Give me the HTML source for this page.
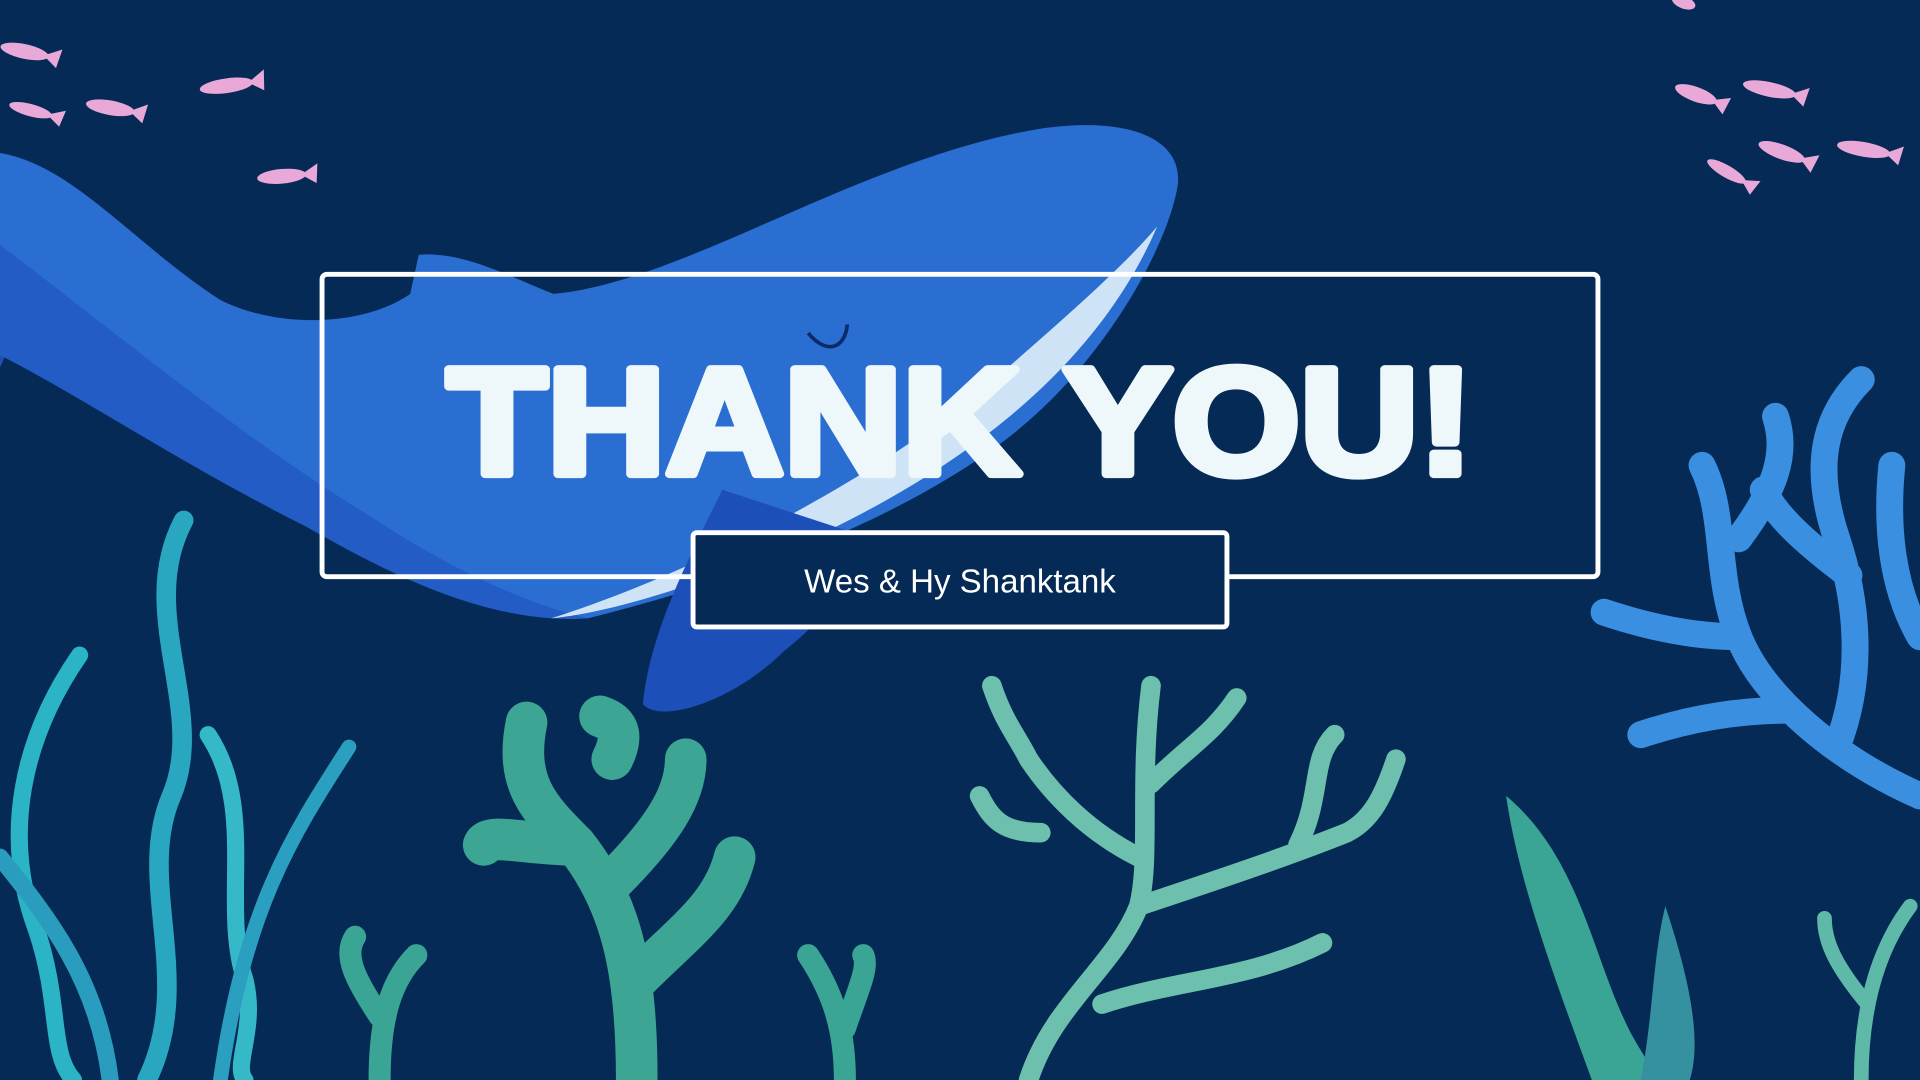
<!DOCTYPE html>
<html><head><meta charset="utf-8"><style>
html,body{margin:0;padding:0;background:#052a55;overflow:hidden}
svg{display:block}
</style></head><body>
<svg width="1920" height="1080" viewBox="0 0 1568 882" xmlns="http://www.w3.org/2000/svg">
<rect width="1568" height="882" fill="#052a55"/>
<!-- fish -->
<g fill="#e8a9d8">
<g transform="translate(20,42) rotate(12)"><ellipse cx="0" cy="0" rx="20" ry="6"/><path d="M16,0 L30,-8 L28,8Z"/></g>
<g transform="translate(25,90) rotate(15)"><ellipse rx="18" ry="5"/><path d="M14,0 L28,-7 L26,7Z"/></g>
<g transform="translate(90,88) rotate(10)"><ellipse rx="20" ry="6"/><path d="M16,0 L30,-8 L28,8Z"/></g>
<g transform="translate(185,70) rotate(-8)"><ellipse rx="22" ry="6"/><path d="M18,0 L32,-9 L30,8Z"/></g>
<g transform="translate(230,144) rotate(-5)"><ellipse rx="20" ry="6"/><path d="M16,0 L30,-8 L28,8Z"/></g>
<g transform="translate(1385,77) rotate(20)"><ellipse rx="18" ry="6"/><path d="M14,0 L28,-7 L26,8Z"/></g>
<g transform="translate(1445,73) rotate(12)"><ellipse rx="22" ry="6"/><path d="M18,0 L32,-8 L30,8Z"/></g>
<g transform="translate(1455,124) rotate(20)"><ellipse rx="20" ry="6"/><path d="M16,0 L30,-8 L28,8Z"/></g>
<g transform="translate(1410,140) rotate(30)"><ellipse rx="18" ry="5"/><path d="M14,0 L28,-7 L26,7Z"/></g>
<g transform="translate(1522,122) rotate(10)"><ellipse rx="22" ry="6"/><path d="M18,0 L32,-8 L30,8Z"/></g>
<g transform="translate(1375,2) rotate(20)"><ellipse rx="10" ry="5"/></g>
</g>
<!-- whale -->
<path d="M0,170 C20,200 25,250 0,300 Z" fill="#1f4fb0"/>
<path d="M0,125 C60,135 110,200 180,245 C230,270 300,265 335,240 L342,208 C380,205 420,228 452,240 C560,230 700,130 850,105 C920,95 965,112 962,150 C955,200 900,300 820,360 C740,420 620,470 480,505 C400,510 320,470 250,430 C150,380 60,320 0,290 Z" fill="#2a6ed2"/>
<path d="M0,200 C80,260 200,360 300,420 C360,460 420,490 480,505 C400,510 320,470 250,430 C150,380 60,320 0,290 Z" fill="#2258c0" opacity="0.8"/>
<path d="M945,185 C900,290 800,380 640,450 C560,480 500,500 450,505 C560,470 700,400 800,320 C870,260 920,215 945,185 Z" fill="#cfe3f7"/>
<path d="M590,400 C560,460 530,520 525,575 C540,592 600,572 640,532 C680,500 700,470 712,440 Z" fill="#1d4fb8"/>
<path d="M660,272 C675,290 690,285 692,265" stroke="#0b2a6a" stroke-width="3" fill="none"/>
<!-- left kelp -->
<g fill="none" stroke-linecap="round">
<path d="M150,425 C110,500 170,580 140,650 C110,720 160,800 120,882" stroke="#2aa7c0" stroke-width="16"/>
<path d="M65,535 C20,600 0,680 30,760 C50,820 40,860 60,882" stroke="#2bb3c6" stroke-width="14"/>
<path d="M170,600 C210,660 180,740 200,800 C210,840 190,870 200,882" stroke="#35b8c8" stroke-width="14"/>
<path d="M285,610 C240,680 200,740 180,882" stroke="#2a9fc0" stroke-width="12"/>
<path d="M0,700 C40,750 80,800 90,882" stroke="#2a9cbe" stroke-width="14"/>
</g>
<!-- green coral left-center -->
<g fill="none" stroke="#3da593" stroke-linecap="round" stroke-width="34">
<path d="M520,882 C520,800 510,740 470,690 C440,660 420,640 430,590"/>
<path d="M470,690 C430,690 400,680 395,690"/>
<path d="M500,720 C540,680 560,650 560,620"/>
<path d="M520,800 C560,760 590,740 600,700"/>
<path d="M500,620 C510,600 505,590 490,585"/>
</g>
<g fill="none" stroke="#3aa594" stroke-linecap="round" stroke-width="18">
<path d="M310,882 C310,830 320,800 340,780"/><path d="M310,830 C290,800 280,780 290,765"/>
<path d="M690,882 C690,840 680,810 660,780"/><path d="M690,840 C700,810 710,790 705,780"/>
</g>
<!-- branch coral center -->
<g fill="none" stroke="#6cc0ad" stroke-linecap="round" stroke-width="16">
<path d="M840,882 C860,820 910,790 930,740 C940,700 930,640 940,560"/>
<path d="M930,740 C990,720 1050,700 1100,680 C1120,670 1130,650 1140,620"/>
<path d="M930,700 C890,680 860,650 840,620 C830,600 820,590 810,560"/>
<path d="M940,640 C970,610 990,600 1010,570"/>
<path d="M900,820 C960,800 1020,800 1080,770"/>
<path d="M1060,690 C1080,650 1070,620 1090,600"/>
<path d="M850,680 C820,680 810,670 800,650"/>
</g>
<!-- right green leaves -->
<path d="M1230,650 C1290,700 1300,780 1330,840 C1340,860 1350,870 1350,882 L1300,882 C1270,800 1240,720 1230,650 Z" fill="#3aa594"/>
<path d="M1360,740 C1380,800 1390,850 1380,882 L1340,882 C1350,830 1350,780 1360,740Z" fill="#3590a0"/>
<g fill="none" stroke="#5fb9a8" stroke-linecap="round" stroke-width="12">
<path d="M1520,882 C1520,830 1530,780 1560,740"/><path d="M1525,820 C1500,790 1490,770 1490,750"/>
</g>
<!-- right blue coral -->
<g fill="none" stroke="#3a8fe0" stroke-linecap="round" stroke-width="22">
<path d="M1568,650 C1500,620 1440,570 1420,520 C1400,470 1410,420 1390,380"/>
<path d="M1420,520 C1380,520 1340,510 1310,500"/>
<path d="M1460,580 C1410,580 1370,590 1340,600"/>
<path d="M1500,610 C1520,560 1520,500 1500,440 C1480,380 1490,340 1520,310"/>
<path d="M1510,470 C1470,440 1450,420 1440,400"/>
<path d="M1420,440 C1450,400 1460,370 1450,340"/>
<path d="M1568,520 C1545,480 1540,430 1545,380"/>
</g>
<!-- frame -->
<rect x="263" y="224" width="1042" height="247" rx="4" fill="none" stroke="#ffffff" stroke-width="4"/>
<text x="784" y="387" text-anchor="middle" font-family="Liberation Sans, sans-serif" font-weight="bold" font-size="124" fill="#eef8fb" stroke="#eef8fb" stroke-width="7" stroke-linejoin="round" textLength="838" lengthAdjust="spacingAndGlyphs">THANK YOU!</text>
<rect x="566" y="435" width="436" height="77" rx="3" fill="#052a55" stroke="#ffffff" stroke-width="4"/>
<text x="784" y="484" text-anchor="middle" font-family="Liberation Sans, sans-serif" font-size="27" fill="#ffffff">Wes &amp; Hy Shanktank</text>
</svg>
</body></html>
